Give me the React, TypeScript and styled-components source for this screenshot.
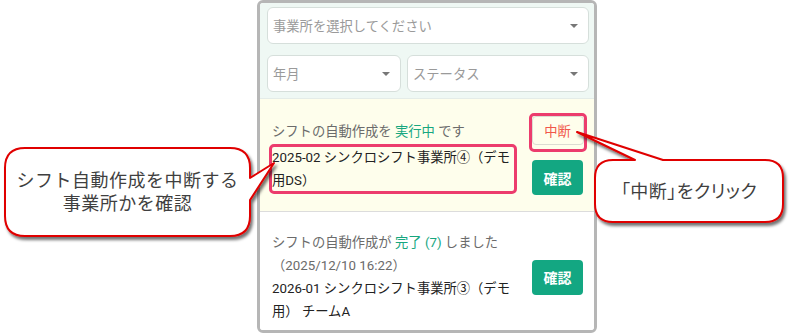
import React from "react";
import styled, { createGlobalStyle } from "styled-components";

const GlobalStyle = createGlobalStyle`
  html, body {
    margin: 0;
    padding: 0;
    background: #ffffff;
  }
  body {
    width: 789px;
    height: 333px;
    overflow: hidden;
    font-family: Roboto, "Noto Sans CJK JP", sans-serif;
  }
`;

const Page = styled.div`
  position: relative;
  width: 789px;
  height: 333px;
  padding-left: 257px;
  box-sizing: border-box;
`;

const Panel = styled.div`
  width: 340px;
  height: 333px;
  box-sizing: border-box;
  border: 3px solid #b6b6b6;
  border-radius: 6px;
  overflow: hidden;
  display: flex;
  flex-direction: column;
  background: #ffffff;
`;

const Filters = styled.div`
  flex-shrink: 0;
  background: #eff8f4;
  padding: 4px 5px 6px 7px;
  display: flex;
  flex-direction: column;
  gap: 11px;
  border-bottom: 1px solid #e4ece8;
`;

const FilterRow = styled.div`
  display: flex;
  gap: 6px;
`;

const Select = styled.div<{ $width?: number }>`
  ${(p) => (p.$width ? `width: ${p.$width}px; flex: none;` : "flex: 1 1 auto;")}
  height: 37px;
  box-sizing: border-box;
  background: #ffffff;
  border: 1px solid #d6dfdb;
  border-radius: 6px;
  display: flex;
  align-items: center;
  justify-content: space-between;
  padding: 0 10px 0 5px;
  color: #9a9a9a;
  font-size: 13.3px;
`;

const Caret = styled.span`
  width: 0;
  height: 0;
  border-left: 4px solid transparent;
  border-right: 4px solid transparent;
  border-top: 4px solid #777;
`;

const Item = styled.div<{ $bg: string; $top: number; $bottom: number }>`
  flex-shrink: 0;
  background: ${(p) => p.$bg};
  display: flex;
  align-items: center;
  justify-content: space-between;
  padding: ${(p) => p.$top}px 11px ${(p) => p.$bottom}px 12px;
  border-bottom: 1px solid #dcdcdc;
`;

const Body = styled.div`
  width: 246px;
  font-size: 13.3px;
`;

const Status = styled.div`
  color: #6b6b6b;
  line-height: 23px;
`;

const Accent = styled.span`
  color: #17a77f;
`;

const Main = styled.div<{ $gap?: number }>`
  position: relative;
  color: #222;
  line-height: 23px;
  margin-top: ${(p) => p.$gap ?? 0}px;
`;

const Highlight = styled.span<{ $t: number; $r: number; $b: number; $l: number }>`
  position: absolute;
  top: ${(p) => p.$t}px;
  right: ${(p) => p.$r}px;
  bottom: ${(p) => p.$b}px;
  left: ${(p) => p.$l}px;
  border: 3px solid #ec3c6d;
  border-radius: 5px;
  pointer-events: none;
`;

const Actions = styled.div`
  display: flex;
  flex-direction: column;
  align-items: center;
  gap: 15px;
  width: 51px;
`;

const StopButton = styled.div`
  position: relative;
  width: 52px;
  height: 29px;
  box-sizing: border-box;
  border: 1px solid #dcdcd2;
  border-radius: 4px;
  color: #f1574a;
  font-size: 13.3px;
  display: flex;
  align-items: center;
  justify-content: center;
`;

const ConfirmButton = styled.div`
  width: 51px;
  height: 35px;
  border-radius: 4px;
  background: #13a782;
  color: #ffffff;
  font-weight: 700;
  font-size: 14px;
  display: flex;
  align-items: center;
  justify-content: center;
`;

const Overlay = styled.svg`
  position: absolute;
  left: 0;
  top: 0;
  width: 789px;
  height: 333px;
  pointer-events: none;
`;

const CalloutText = styled.div<{ $x: number; $y: number; $w: number; $h: number }>`
  position: absolute;
  left: ${(p) => p.$x}px;
  top: ${(p) => p.$y}px;
  width: ${(p) => p.$w}px;
  height: ${(p) => p.$h}px;
  display: flex;
  flex-direction: column;
  align-items: center;
  justify-content: center;
  font-family: "Noto Sans CJK JP", sans-serif;
  font-size: 18px;
  color: #3f3f3f;
  letter-spacing: 0.5px;
`;

const CalloutLine = styled.div<{ $palt?: boolean }>`
  line-height: 23px;
  height: 23px;
  ${(p) => (p.$palt ? `font-feature-settings: "palt";` : "")}
`;

const leftCallout =
  "M25,148 H230 Q250,148 250,168 V178 L274,163 L250,200 V216 Q250,236 230,236 H25 Q5,236 5,216 V168 Q5,148 25,148 Z";
const rightCallout =
  "M613,160 H635 L577,132 L663,160 H765 Q783,160 783,178 V204 Q783,222 765,222 H613 Q595,222 595,204 V178 Q595,160 613,160 Z";

export default function App() {
  return (
    <>
      <GlobalStyle />
      <Page>
        <Panel>
          <Filters>
            <Select>
              事業所を選択してください
              <Caret />
            </Select>
            <FilterRow>
              <Select $width={134}>
                年月
                <Caret />
              </Select>
              <Select>
                ステータス
                <Caret />
              </Select>
            </FilterRow>
          </Filters>
          <Item $bg="#fefeec" $top={17} $bottom={16}>
            <Body>
              <Status>
                シフトの自動作成を <Accent>実行中</Accent> です
              </Status>
              <Main $gap={3}>
                2025-02 シンクロシフト事業所④（デモ用DS）
                <Highlight $t={-2} $r={1} $b={-2} $l={-3} />
              </Main>
            </Body>
            <Actions>
              <StopButton>
                中断
                <Highlight $t={-4} $r={-4} $b={-8} $l={-4} />
              </StopButton>
              <ConfirmButton>確認</ConfirmButton>
            </Actions>
          </Item>
          <Item $bg="#ffffff" $top={19} $bottom={16}>
            <Body>
              <Status>
                シフトの自動作成が <Accent>完了 (7)</Accent> しました
              </Status>
              <Status>（2025/12/10 16:22）</Status>
              <Main>2026-01 シンクロシフト事業所③（デモ用） チームA</Main>
            </Body>
            <Actions>
              <ConfirmButton>確認</ConfirmButton>
            </Actions>
          </Item>
        </Panel>

        <Overlay viewBox="0 0 789 333">
          <defs>
            <filter id="shadow" x="-10%" y="-10%" width="130%" height="140%">
              <feDropShadow dx="2" dy="3" stdDeviation="1.5" floodColor="#000" floodOpacity="0.55" />
            </filter>
          </defs>
          <path d={leftCallout} fill="#fff" stroke="#e00000" strokeWidth="2" strokeLinejoin="round" filter="url(#shadow)" />
          <path d={rightCallout} fill="#fff" stroke="#e00000" strokeWidth="2" strokeLinejoin="round" filter="url(#shadow)" />
        </Overlay>
        <CalloutText $x={5} $y={150} $w={245} $h={82}>
          <CalloutLine>シフト自動作成を中断する</CalloutLine>
          <CalloutLine>事業所かを確認</CalloutLine>
        </CalloutText>
        <CalloutText $x={595} $y={160} $w={188} $h={60}>
          <CalloutLine $palt>「中断」をクリック</CalloutLine>
        </CalloutText>
      </Page>
    </>
  );
}
